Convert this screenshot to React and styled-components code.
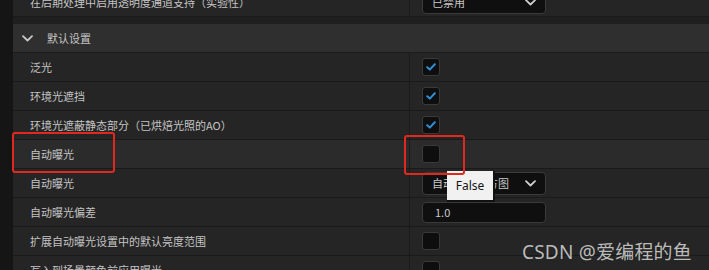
import React from "react";
import styled, { createGlobalStyle } from "styled-components";

const GlobalStyle = createGlobalStyle`
  html, body {
    margin: 0;
    padding: 0;
    background: #161616;
    overflow: hidden;
  }
  body {
    font-family: "Noto Sans CJK SC", "Noto Sans", sans-serif;
  }
`;

const Page = styled.div`
  position: relative;
  display: flex;
  width: 709px;
  height: 270px;
  overflow: hidden;
`;

const Gutter = styled.div`
  width: 13px;
  flex-shrink: 0;
  background: #151515;
`;

const Panel = styled.div`
  flex: 1;
  display: flex;
  flex-direction: column;
  background: #1e1e1e;
`;

const Row = styled.div`
  position: relative;
  display: grid;
  grid-template-columns: 397px 1fr;
  height: 28px;
  flex-shrink: 0;
  background: ${(p) => (p.$hover ? "#2b2b2b" : "#252525")};
  border-bottom: 1px solid #1a1a1a;
  margin-top: ${(p) => p.$offset || 0}px;
`;

const Label = styled.div`
  position: relative;
  display: flex;
  align-items: center;
  padding-left: 17px;
  border-right: 1px solid #1b1b1b;
  font-size: 11px;
  color: #c4c4c4;
  white-space: nowrap;
  text-spacing-trim: space-all;
`;

const Value = styled.div`
  position: relative;
  display: flex;
  align-items: center;
  padding-left: 12px;
`;

const Gap = styled.div`
  height: 7px;
  flex-shrink: 0;
  background: #1f1f1f;
`;

const Header = styled.div`
  display: flex;
  align-items: center;
  gap: 14px;
  height: 28px;
  flex-shrink: 0;
  padding-left: 9px;
  background: #2f2f2f;
  border-bottom: 1px solid #1b1b1b;
  font-size: 11px;
  color: #c4c4c4;
`;

const Box = styled.div`
  width: 16px;
  height: 16px;
  border: 1px solid #3a3a3a;
  border-radius: 3px;
  background: #0e0e0e;
  display: flex;
  align-items: center;
  justify-content: center;
`;

const Field = styled.div`
  position: relative;
  box-sizing: border-box;
  width: 124px;
  height: ${(p) => p.$h || 23}px;
  display: flex;
  align-items: center;
  justify-content: space-between;
  padding: 0 9px 0 ${(p) => p.$pad || 9}px;
  background: #0f0f0f;
  border: 1px solid #3a3a3a;
  border-radius: 4px;
  font-size: 11px;
  color: #c8c8c8;
`;

const Tooltip = styled.div`
  position: absolute;
  left: 24px;
  top: -2px;
  width: 48px;
  height: 31px;
  box-sizing: border-box;
  display: flex;
  align-items: center;
  justify-content: center;
  background: #f1f1f1;
  border-right: 2px solid #121212;
  border-bottom: 2px solid #121212;
  font-family: "Noto Sans", sans-serif;
  font-size: 12px;
  color: #151515;
  z-index: 2;
`;

const Marker = styled.div`
  position: absolute;
  left: ${(p) => p.$x}px;
  top: ${(p) => p.$y}px;
  width: ${(p) => p.$w}px;
  height: ${(p) => p.$h}px;
  box-sizing: border-box;
  border: 2px solid #e0281f;
  border-radius: 3px;
  z-index: 3;
`;

const Watermark = styled.div`
  position: absolute;
  right: 17px;
  top: 237px;
  font-family: "Noto Sans", "Noto Sans CJK SC", sans-serif;
  font-size: 19px;
  color: rgba(215, 215, 215, 0.85);
  letter-spacing: 0.2px;
  z-index: 4;
`;

const Chevron = ({ color = "#cfcfcf" }) => (
  <svg width="11" height="7" viewBox="0 0 11 7">
    <path d="M1 1.2 L5.5 5.5 L10 1.2" fill="none" stroke={color} strokeWidth="1.8" strokeLinecap="round" strokeLinejoin="round" />
  </svg>
);

const Check = () => (
  <svg width="10" height="8" viewBox="0 0 10 8">
    <path d="M1.2 4.2 L3.8 6.6 L8.8 1.3" fill="none" stroke="#2f8fd8" strokeWidth="2" strokeLinecap="round" strokeLinejoin="round" />
  </svg>
);

const Checkbox = ({ checked }) => <Box>{checked && <Check />}</Box>;

const Select = ({ text, children }) => (
  <Field>
    <span>{text}</span>
    <Chevron />
    {children}
  </Field>
);

export default function App() {
  return (
    <>
      <GlobalStyle />
      <Page lang="zh-CN">
        <Gutter />
        <Panel>
          <Row $offset={-12}>
            <Label>在后期处理中启用透明度通道支持（实验性）</Label>
            <Value>
              <Select text="已禁用" />
            </Value>
          </Row>
          <Gap />
          <Header>
            <Chevron color="#c8c8c8" />
            <span>默认设置</span>
          </Header>
          <Row>
            <Label>泛光</Label>
            <Value><Checkbox checked /></Value>
          </Row>
          <Row>
            <Label>环境光遮挡</Label>
            <Value><Checkbox checked /></Value>
          </Row>
          <Row>
            <Label>环境光遮蔽静态部分（已烘焙光照的AO）</Label>
            <Value><Checkbox checked /></Value>
          </Row>
          <Row $hover>
            <Label>
              自动曝光
              <Marker $x={-1} $y={-8} $w={103} $h={41} />
            </Label>
            <Value>
              <Checkbox />
              <Marker $x={-6} $y={-5} $w={61} $h={40} />
            </Value>
          </Row>
          <Row>
            <Label>自动曝光</Label>
            <Value>
              <Select text="自动曝光直方图">
                <Tooltip>False</Tooltip>
              </Select>
            </Value>
          </Row>
          <Row>
            <Label>自动曝光偏差</Label>
            <Value>
              <Field $h={21} $pad={12}>1.0</Field>
            </Value>
          </Row>
          <Row>
            <Label>扩展自动曝光设置中的默认亮度范围</Label>
            <Value><Checkbox /></Value>
          </Row>
          <Row>
            <Label>写入到场景颜色前应用曝光</Label>
            <Value><Checkbox /></Value>
          </Row>
        </Panel>
        <Watermark>CSDN @爱编程的鱼</Watermark>
      </Page>
    </>
  );
}
